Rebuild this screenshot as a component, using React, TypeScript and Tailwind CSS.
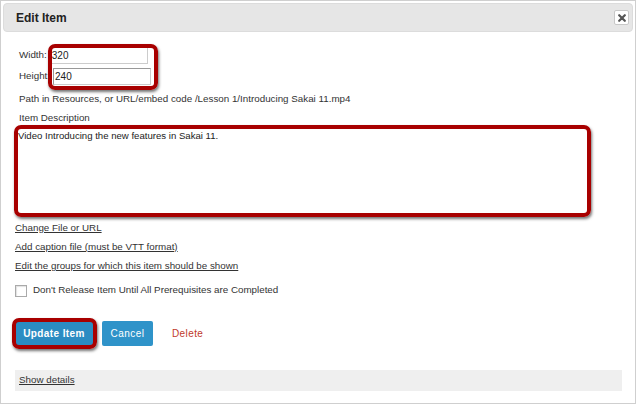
import React from "react";

const font = { fontFamily: '"Liberation Sans", Arial, sans-serif' };

function Highlight({ className }: { className: string }) {
  return (
    <div
      className={`absolute pointer-events-none rounded-[7px] border-[4px] border-[#a80000] shadow-[1px_2px_3px_rgba(0,0,0,0.55)] ${className}`}
    />
  );
}

function LinkRow({ text }: { text: string }) {
  return (
    <div className="h-[19px] leading-[19px]">
      <a href="#" className="text-[#333] underline underline-offset-[1px]">
        {text}
      </a>
    </div>
  );
}

export default function App() {
  return (
    <div className="w-[640px] h-[405px] bg-white overflow-hidden text-[9.8px] text-[#333]" style={font}>
      <div className="relative w-[636px] h-[404px] border border-[#cfcfcf] bg-white p-[2px] flex flex-col">
        {/* header */}
        <div className="h-[29px] flex items-center justify-between rounded-[4px] bg-[#e6e6e6] border border-[#dcdcdc] pl-[12px] pr-[3px]">
          <h1 className="text-[12px] font-bold text-[#222]">Edit Item</h1>
          <button className="w-[15px] h-[15px] flex items-center justify-center rounded-[2px] border border-[#c8c8c8] bg-white">
            <svg width="8" height="8" viewBox="0 0 8 8">
              <path d="M1.2 1.2L6.8 6.8M6.8 1.2L1.2 6.8" stroke="#555" strokeWidth="2.2" strokeLinecap="round" />
            </svg>
          </button>
        </div>

        {/* body */}
        <div className="flex flex-col pl-[12px]">
          <div className="mt-[15px] h-[17px] flex items-center pl-[4px]">
            <span>Width:</span>
            <input
              defaultValue="320"
              className="ml-[3px] w-[98px] h-[17px] border border-t-[#999] border-l-[#999] border-r-[#ccc] border-b-[#ccc] px-[1px] text-[10px] text-[#222] outline-none"
            />
          </div>
          <div className="mt-[4px] h-[17px] flex items-center pl-[4px]">
            <span>Height:</span>
            <input
              defaultValue="240"
              className="ml-[3px] w-[98px] h-[17px] border border-t-[#999] border-l-[#999] border-r-[#ccc] border-b-[#ccc] px-[1px] text-[10px] text-[#222] outline-none"
            />
          </div>
          <div className="mt-[4px] h-[19px] leading-[19px] pl-[4px]">
            Path in Resources, or URL/embed code /Lesson 1/Introducing Sakai 11.mp4
          </div>
          <div className="h-[19px] leading-[19px] pl-[4px]">Item Description</div>
          <textarea
            defaultValue="Video Introducing the new features in Sakai 11."
            className="ml-[2px] w-[572px] h-[87px] border border-[#aaa] px-0 pt-px text-[9.6px] leading-[13px] text-[#222] resize-none outline-none"
          />

          <div className="mt-[4px]">
            <LinkRow text="Change File or URL" />
            <LinkRow text="Add caption file (must be VTT format)" />
            <LinkRow text="Edit the groups for which this item should be shown" />
          </div>

          <label className="mt-[6px] h-[19px] flex items-center gap-[6px]">
            <span className="w-[12px] h-[12px] border border-[#aaa] bg-white shadow-[inset_1px_1px_1px_rgba(0,0,0,0.12)]" />
            <span>Don't Release Item Until All Prerequisites are Completed</span>
          </label>

          <div className="mt-[21px] h-[25px] flex items-center">
            <button className="w-[78px] h-[25px] rounded-[2px] bg-[#2b8cc2] text-white font-bold text-[10px] tracking-[0.4px]">
              Update Item
            </button>
            <button className="ml-[9px] w-[51px] h-[25px] rounded-[2px] bg-[#2f93c9] text-white text-[10px] tracking-[0.5px]">
              Cancel
            </button>
            <a href="#" className="ml-[19px] text-[#c0392b] text-[10px] tracking-[0.4px]">
              Delete
            </a>
          </div>

          <div className="mt-[24px] mr-[11px] h-[21px] flex items-center bg-[#efefef] pl-[4px]">
            <a href="#" className="text-[#333] underline underline-offset-[1px]">
              Show details
            </a>
          </div>
        </div>

        {/* annotation highlights */}
        <Highlight className="left-[47px] top-[43px] w-[110px] h-[46px]" />
        <Highlight className="left-[13px] top-[124px] w-[577px] h-[92px]" />
        <Highlight className="left-[11px] top-[317px] w-[85px] h-[31px]" />
      </div>
    </div>
  );
}
